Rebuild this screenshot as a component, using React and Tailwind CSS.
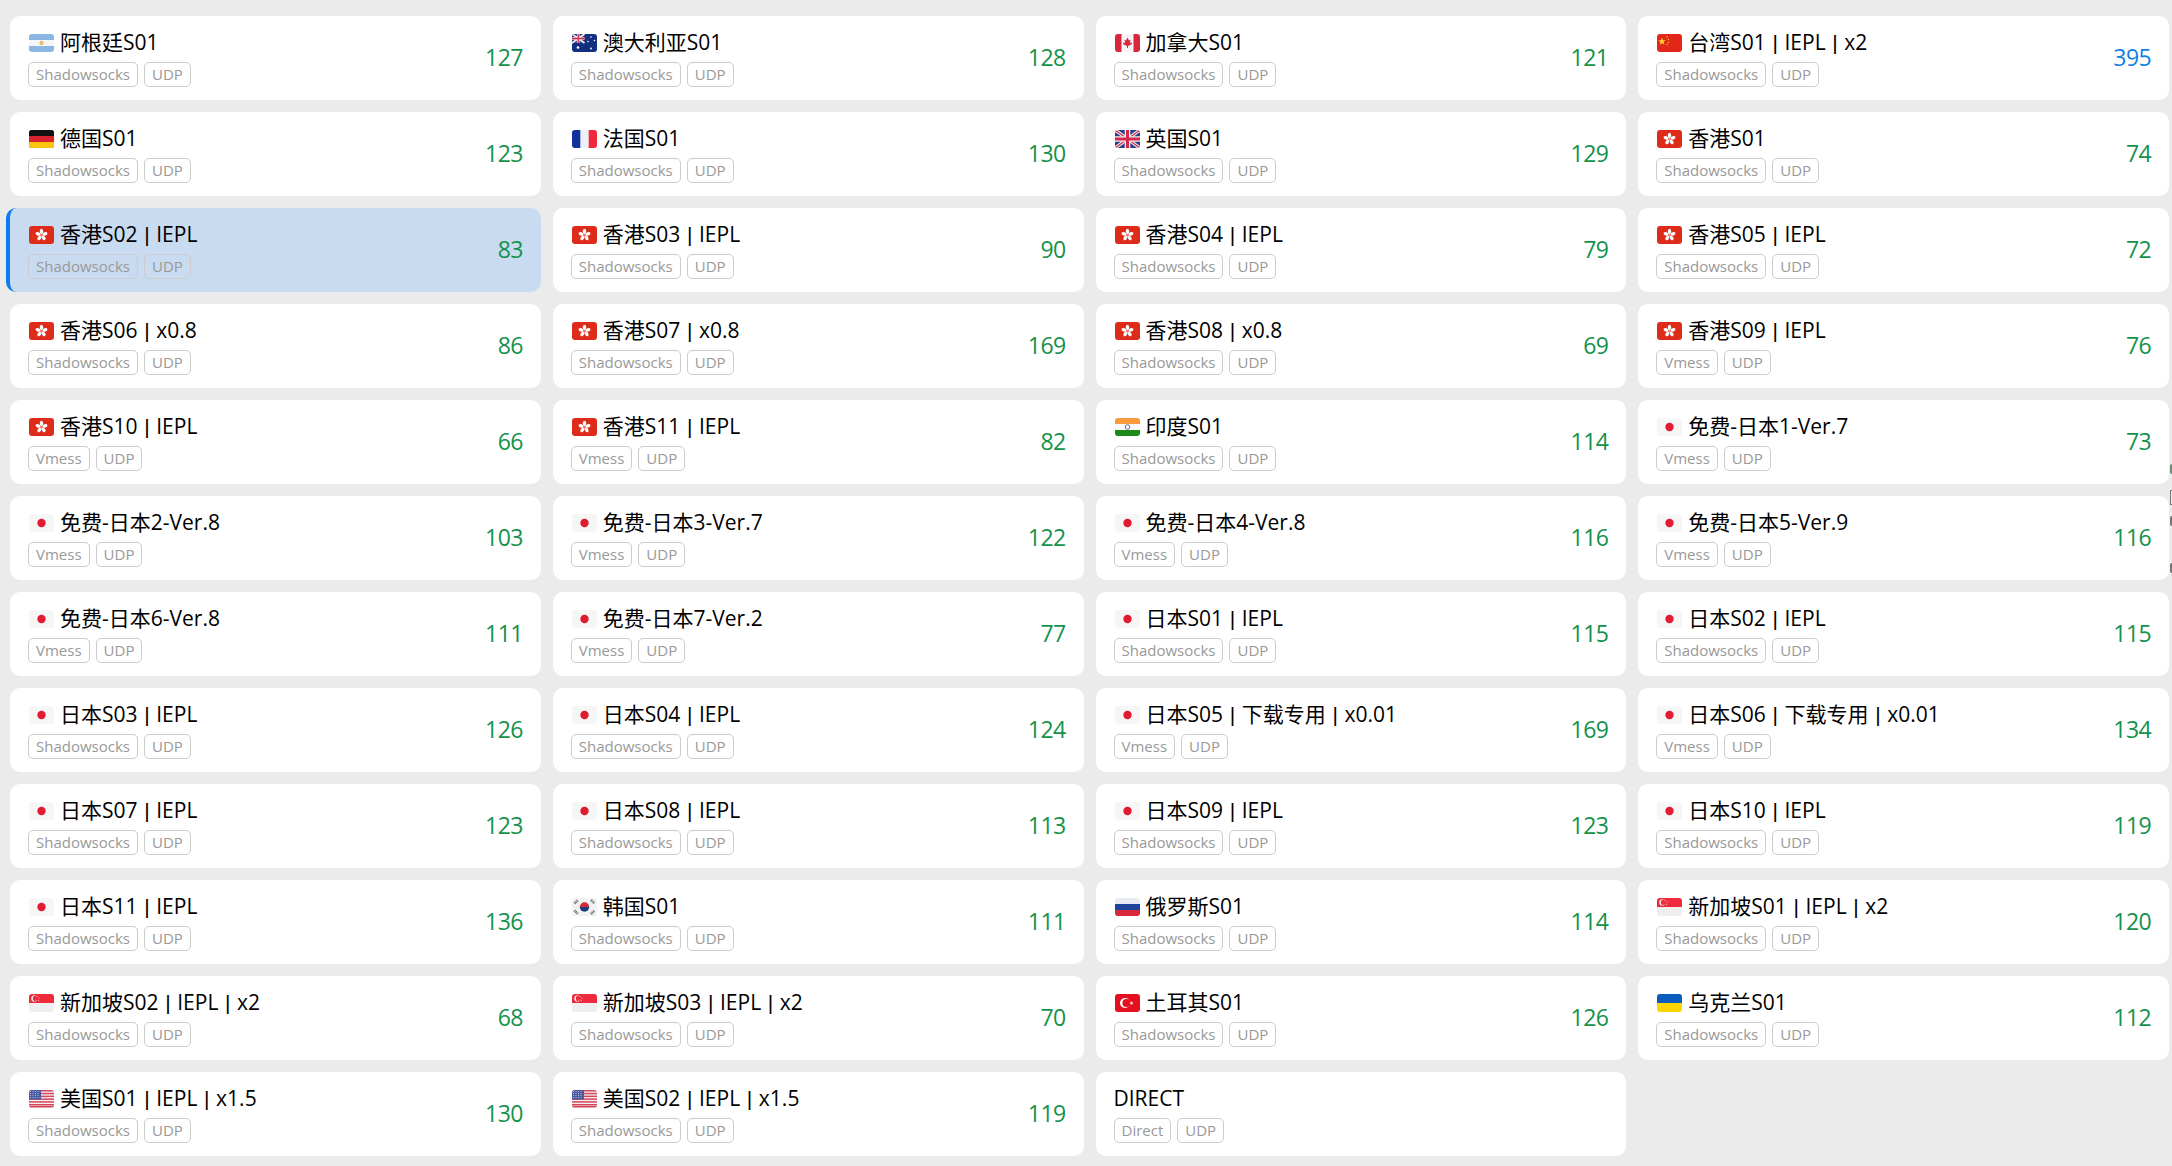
import React from "react";

const S = "Shadowsocks", V = "Vmess";
const rows = [
  ["ar", "阿根廷S01", S, 127], ["au", "澳大利亚S01", S, 128], ["ca", "加拿大S01", S, 121], ["cn", "台湾S01 | IEPL | x2", S, 395],
  ["de", "德国S01", S, 123], ["fr", "法国S01", S, 130], ["gb", "英国S01", S, 129], ["hk", "香港S01", S, 74],
  ["hk", "香港S02 | IEPL", S, 83, true], ["hk", "香港S03 | IEPL", S, 90], ["hk", "香港S04 | IEPL", S, 79], ["hk", "香港S05 | IEPL", S, 72],
  ["hk", "香港S06 | x0.8", S, 86], ["hk", "香港S07 | x0.8", S, 169], ["hk", "香港S08 | x0.8", S, 69], ["hk", "香港S09 | IEPL", V, 76],
  ["hk", "香港S10 | IEPL", V, 66], ["hk", "香港S11 | IEPL", V, 82], ["in", "印度S01", S, 114], ["jp", "免费-日本1-Ver.7", V, 73],
  ["jp", "免费-日本2-Ver.8", V, 103], ["jp", "免费-日本3-Ver.7", V, 122], ["jp", "免费-日本4-Ver.8", V, 116], ["jp", "免费-日本5-Ver.9", V, 116],
  ["jp", "免费-日本6-Ver.8", V, 111], ["jp", "免费-日本7-Ver.2", V, 77], ["jp", "日本S01 | IEPL", S, 115], ["jp", "日本S02 | IEPL", S, 115],
  ["jp", "日本S03 | IEPL", S, 126], ["jp", "日本S04 | IEPL", S, 124], ["jp", "日本S05 | 下载专用 | x0.01", V, 169], ["jp", "日本S06 | 下载专用 | x0.01", V, 134],
  ["jp", "日本S07 | IEPL", S, 123], ["jp", "日本S08 | IEPL", S, 113], ["jp", "日本S09 | IEPL", S, 123], ["jp", "日本S10 | IEPL", S, 119],
  ["jp", "日本S11 | IEPL", S, 136], ["kr", "韩国S01", S, 111], ["ru", "俄罗斯S01", S, 114], ["sg", "新加坡S01 | IEPL | x2", S, 120],
  ["sg", "新加坡S02 | IEPL | x2", S, 68], ["sg", "新加坡S03 | IEPL | x2", S, 70], ["tr", "土耳其S01", S, 126], ["ua", "乌克兰S01", S, 112],
  ["us", "美国S01 | IEPL | x1.5", S, 130], ["us", "美国S02 | IEPL | x1.5", S, 119], [null, "DIRECT", "Direct", null],
];

function Flower() {
  return (
    <g fill="#fff">
      {[0, 72, 144, 216, 288].map((a) => (
        <ellipse key={a} cx="12.5" cy="5.4" rx="1.7" ry="2.6" transform={`rotate(${a} 12.5 9)`} />
      ))}
      <circle cx="12.5" cy="9" r="1.1" fill="#e88a7e" />
    </g>
  );
}

function FlagArt({ code }) {
  switch (code) {
    case "ar":
      return (<><rect width="25" height="18" fill="#8ab8e2" /><rect y="6" width="25" height="6" fill="#f4f6f8" /><circle cx="12.5" cy="9" r="2" fill="#e8a33d" /><circle cx="12.5" cy="9" r="0.8" fill="#f4f6f8" /></>);
    case "au":
      return (<><rect width="25" height="18" fill="#12307f" /><rect width="12.5" height="9" fill="#2c3f86" /><path d="M0 0L12.5 9M12.5 0L0 9" stroke="#eee" strokeWidth="1.8" /><path d="M6.25 0V9M0 4.5H12.5" stroke="#eee" strokeWidth="2.6" /><path d="M6.25 0V9M0 4.5H12.5" stroke="#d8284a" strokeWidth="1.3" /><g fill="#fff"><circle cx="6" cy="13.5" r="1.3" /><circle cx="19" cy="3" r=".8" /><circle cx="19" cy="14.5" r=".9" /><circle cx="16" cy="7.5" r=".8" /><circle cx="22.5" cy="6.5" r=".8" /></g></>);
    case "ca":
      return (<><rect width="25" height="18" fill="#f5f3f3" /><rect width="6.5" height="18" fill="#d8283c" /><rect x="18.5" width="6.5" height="18" fill="#d8283c" /><path d="M12.5 3.5L14 6.5L15.5 5.8L15 9L17 8.5L16.5 10.5L13 12V14H12V12L8.5 10.5L8 8.5L10 9L9.5 5.8L11 6.5Z" fill="#d8283c" /></>);
    case "cn":
      return (<><rect width="25" height="18" fill="#e2261a" /><path d="M5 3.5L6 6.3L8.8 6.3L6.6 8L7.4 10.8L5 9.2L2.6 10.8L3.4 8L1.2 6.3L4 6.3Z" fill="#fc3" /><g fill="#fc3"><circle cx="10" cy="3" r=".7" /><circle cx="11.5" cy="5.5" r=".7" /><circle cx="11.5" cy="8.5" r=".7" /><circle cx="10" cy="10.5" r=".7" /></g></>);
    case "de":
      return (<><rect width="25" height="18" fill="#d9232e" /><rect width="25" height="6" fill="#111" /><rect y="12" width="25" height="6" fill="#fcc60e" /></>);
    case "fr":
      return (<><rect width="25" height="18" fill="#eef1f8" /><rect width="8.3" height="18" fill="#10339a" /><rect x="16.7" width="8.3" height="18" fill="#ee2a3c" /></>);
    case "gb":
      return (<><rect width="25" height="18" fill="#2c3f86" /><path d="M0 0L25 18M25 0L0 18" stroke="#eee" strokeWidth="3.4" /><path d="M0 0L25 18M25 0L0 18" stroke="#d8284a" strokeWidth="1.2" /><path d="M12.5 0V18M0 9H25" stroke="#eee" strokeWidth="5.6" /><path d="M12.5 0V18M0 9H25" stroke="#d8284a" strokeWidth="3" /></>);
    case "hk":
      return (<><rect width="25" height="18" fill="#dd2c1a" /><Flower /></>);
    case "in":
      return (<><rect width="25" height="18" fill="#f8f8f8" /><rect width="25" height="6" fill="#f99a3c" /><rect y="12" width="25" height="6" fill="#1d8a18" /><circle cx="12.5" cy="9" r="2.3" fill="none" stroke="#3f4f9a" strokeWidth=".8" /></>);
    case "jp":
      return (<><rect width="25" height="18" fill="#f6f6f6" /><circle cx="12.5" cy="9" r="4.2" fill="#e11b30" /></>);
    case "kr":
      return (<><rect width="25" height="18" fill="#f2f2f2" /><path d="M7.8 9A4.7 4.7 0 0 1 17.2 9Z" fill="#d8283c" /><path d="M7.8 9A4.7 4.7 0 0 0 17.2 9Z" fill="#15407f" /><g stroke="#666" strokeWidth="2.6" strokeDasharray="1 .7"><path d="M2.5 5.5L6 2" /><path d="M19 2L22.5 5.5" /><path d="M2.5 12.5L6 16" /><path d="M19 16L22.5 12.5" /></g></>);
    case "ru":
      return (<><rect width="25" height="18" fill="#e8ecf2" /><rect y="6" width="25" height="6" fill="#1e439b" /><rect y="12" width="25" height="6" fill="#d8283c" /></>);
    case "sg":
      return (<><rect width="25" height="18" fill="#eeeeee" /><rect width="25" height="9" fill="#ee2a3c" /><circle cx="5.5" cy="4.5" r="3.2" fill="#f6f6f6" /><circle cx="6.8" cy="4.5" r="3" fill="#ee2a3c" /><g fill="#f6f6f6"><circle cx="8" cy="2.6" r=".5" /><circle cx="10" cy="4" r=".5" /><circle cx="9.5" cy="6.2" r=".5" /><circle cx="7" cy="6.2" r=".5" /></g></>);
    case "tr":
      return (<><rect width="25" height="18" fill="#e5101f" /><circle cx="10" cy="9" r="5" fill="#fff" /><circle cx="11.4" cy="9" r="4" fill="#e5101f" /><path d="M16.5 7L17 8.5L18.6 8.5L17.3 9.4L17.8 11L16.5 10L15.2 11L15.7 9.4L14.4 8.5L16 8.5Z" fill="#fff" /></>);
    case "ua":
      return (<><rect width="25" height="9" fill="#0a5cbd" /><rect y="9" width="25" height="9" fill="#fdd500" /></>);
    case "us":
      return (<><rect width="25" height="18" fill="#f4f0f0" />{[0, 2.8, 5.6, 8.4, 11.2, 14, 16].map((y) => (<rect key={y} y={y} width="25" height="1.5" fill="#d5465c" />))}<rect width="12" height="9.5" fill="#4a5a9e" /><g fill="#c5cbe5">{[1.5, 3.5, 5.5, 7.5].flatMap((y) => [1.5, 4, 6.5, 9].map((x) => (<circle key={`${x}-${y}`} cx={x} cy={y} r=".55" />)))}</g></>);
    default:
      return null;
  }
}

function Flag({ code }) {
  return (
    <svg viewBox="0 0 25 18" width="25" height="18" className="ml-[1px] shrink-0 rounded-[3px]">
      <FlagArt code={code} />
    </svg>
  );
}

function Tag({ children }) {
  return (
    <span className="flex h-[25px] items-center rounded-[5px] border border-[#cccccc] px-[7px] text-[15px] leading-none text-[#999999]">
      {children}
    </span>
  );
}

function Name({ text }) {
  const parts = text.split(" | ");
  return (
    <span className="-mt-[1px] whitespace-pre">
      {parts.map((p, i) => (
        <React.Fragment key={i}>
          {i > 0 && <span className="px-[0.8px] font-['Liberation_Sans',sans-serif]"> | </span>}
          {p}
        </React.Fragment>
      ))}
    </span>
  );
}

function Card({ flag, name, proto, delay, active }) {
  return (
    <div
      className={
        active
          ? "-ml-1 flex h-[84px] items-center justify-between rounded-[10px] border-l-[4px] border-[#0a7cf0] bg-[#c9dbf0] pr-[18px] pl-[18px]"
          : "flex h-[84px] items-center justify-between rounded-[10px] bg-white pr-[18px] pl-[18px]"
      }
    >
      <div className="flex flex-col gap-[8px] pt-[2px]">
        <div className="flex h-[22px] items-center gap-[6px] text-[21px] leading-none text-black">
          {flag && <Flag code={flag} />}
          <Name text={name} />
        </div>
        <div className="flex gap-[6px]">
          <Tag>{proto}</Tag>
          <Tag>UDP</Tag>
        </div>
      </div>
      {delay !== null && (
        <span className={delay > 200 ? "-mt-[2px] text-[23px] leading-none tracking-[-0.6px] text-[#0d7fe6]" : "-mt-[2px] text-[23px] leading-none tracking-[-0.6px] text-[#15924a]"}>
          {delay}
        </span>
      )}
    </div>
  );
}

export default function App() {
  return (
    <div className="relative min-h-[1166px] overflow-hidden bg-[#ebebeb] pt-[16px] pr-[3px] pl-[10px] font-['Open_Sans','Noto_Sans_CJK_SC',sans-serif]">
      <div className="grid grid-cols-4 gap-[12px]">
        {rows.map(([flag, name, proto, delay, active]) => (
          <Card key={name} flag={flag} name={name} proto={proto} delay={delay} active={active} />
        ))}
      </div>
      <span className="absolute top-[464px] right-0 h-[10px] w-[2px] rounded-l-full bg-[#6b8a78]" />
      <span className="absolute top-[490px] right-0 h-[15px] w-[2px] border border-r-0 border-[#777777]" />
      <span className="absolute top-[516px] right-0 h-[10px] w-[2px] rounded-l-full bg-[#777777]" />
      <span className="absolute top-[563px] right-0 h-[10px] w-[2px] rounded-l-full bg-[#777777]" />
    </div>
  );
}
